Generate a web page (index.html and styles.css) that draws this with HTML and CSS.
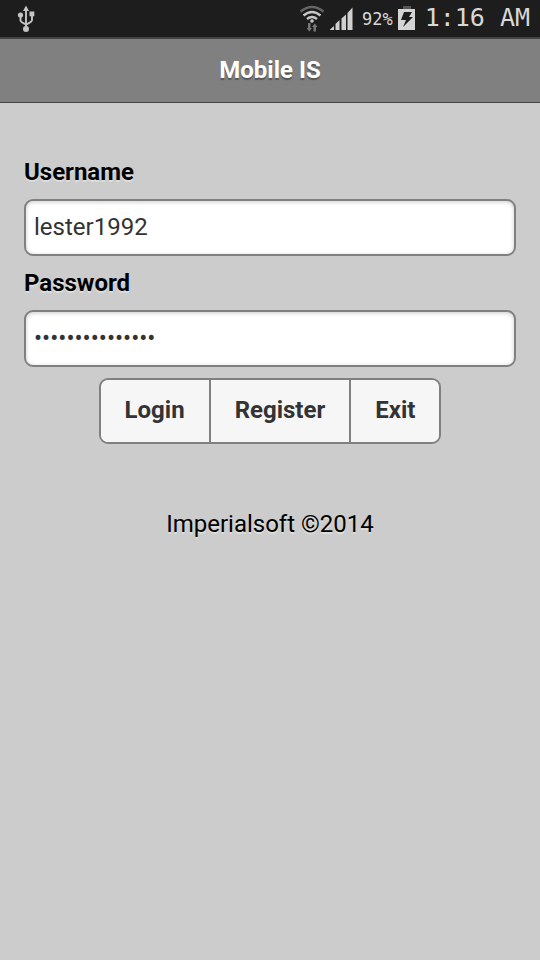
FILE: index.html
```html
<!DOCTYPE html>
<html lang="en">
<head>
<meta charset="utf-8">
<meta name="viewport" content="width=device-width, initial-scale=1">
<title>Mobile IS</title>
<link rel="stylesheet" href="styles.css">
</head>
<body>
<div class="status">
  <svg class="usb" width="18" height="28" viewBox="0 0 18 28" aria-hidden="true">
    <path d="M9 5v18M3.500 11v4.500q0 1.500 5.500 4M15 10v5q0 2-6 4.500" fill="none" stroke="#c4c4c4" stroke-width="1.900"/>
    <path d="M9 .500l3 5.500h-6z" fill="#c4c4c4"/>
    <circle cx="9" cy="24" r="3" fill="#c4c4c4"/>
    <circle cx="3.500" cy="10" r="2.600" fill="#c4c4c4"/>
    <rect x="12.500" y="6.500" width="4.800" height="4.800" fill="#c4c4c4"/>
  </svg>
  <div class="indicators">
    <svg width="26" height="28" viewBox="0 0 26 28" aria-hidden="true">
      <g fill="none" stroke-width="2.300">
        <path d="M1.500 6.500q11.500-9 23 0" stroke="#666"/>
        <path d="M4.500 10.500q8.500-7 17 0M8 14q5-4 10 0" stroke="#c8c8c8"/>
      </g>
      <circle cx="13" cy="16" r="1.800" fill="#c8c8c8"/>
      <path d="M9 18h2.500v5H13l-2.700 3.500L7.500 23H9zM14.500 26.500V22H13l2.800-3.500 2.700 3.500H17v4.500z" fill="#777"/>
    </svg>
    <svg width="23" height="24" viewBox="0 0 23 24" aria-hidden="true">
      <path d="M0 23v-.500L4 19v4zM5.500 23v-6L9.500 13v10zM11.500 23V11.500l4.500-4V23zM17.500 23V6L22.500 .500V23z" fill="#d0d0d0"/>
    </svg>
    <span class="percent">92%</span>
    <svg width="18" height="25" viewBox="0 0 18 25" aria-hidden="true">
      <path d="M5 0h8v3H5z" fill="#555"/>
      <path d="M0 3h17v21H0z" fill="#d4d4d4"/>
      <path d="M6 6h8l-3 5h4L5 21l3-7H3z" fill="#1d1d1d"/>
    </svg>
    <time class="clock">1:16 AM</time>
  </div>
</div>
<header class="header"><h1 class="title">Mobile IS</h1></header>
<main class="content">
  <form class="form">
    <label class="label" for="username">Username</label>
    <input class="field" id="username" type="text" value="lester1992">
    <label class="label" for="password">Password</label>
    <input class="field" id="password" type="password" value="123456789012345">
    <div class="buttons">
      <button class="button" type="button">Login</button>
      <button class="button" type="button">Register</button>
      <button class="button" type="button">Exit</button>
    </div>
  </form>
  <p class="copyright">Imperialsoft ©2014</p>
</main>
</body>
</html>
```
FILE: styles.css
```css
* { box-sizing: border-box; }

body {
  margin: 0;
  min-height: 100vh;
  background: #ccc;
  color: #000;
  font: 24px/32px Roboto, sans-serif;
}

.status {
  display: flex;
  align-items: center;
  justify-content: space-between;
  height: 37px;
  padding: 0 10px 0 17px;
  background: #1d1d1d;
}

.indicators {
  display: flex;
  align-items: center;
  gap: 5px;
  color: #d8d8d8;
  font-family: "DejaVu Sans Mono", monospace;
}

.percent {
  margin-left: 4px;
  font-size: 17px;
}

.clock {
  margin-left: 4px;
  padding-bottom: 2px;
  font-size: 25px;
}

.header {
  padding: 15px 24px 16px;
  border-top: 2px solid #444;
  border-bottom: 1px solid #444;
  background: #808080;
}

.title {
  margin: 0;
  color: #fff;
  font-size: 24px;
  font-weight: 700;
  line-height: 32px;
  text-align: center;
  text-shadow: 0 2px 1px #555;
}

.content { padding: 53px 24px 24px; }

.form {
  display: flex;
  flex-direction: column;
  gap: 11px;
}

.label {
  font-weight: 700;
  text-shadow: 0 2px 0 #ddd;
}

.field {
  width: 100%;
  height: 57px;
  padding: 0 8px 2px;
  border: 2px solid #808080;
  border-radius: 9px;
  background: #fff;
  box-shadow: inset 0 1px 4px #ccc;
  color: #333;
  font: inherit;
}

.buttons {
  display: flex;
  align-self: center;
  border: 2px solid #808080;
  border-radius: 9px;
  overflow: hidden;
}

.button {
  height: 62px;
  padding: 0 24px 2px;
  border: 0;
  background: #f6f6f6;
  color: #333;
  font: inherit;
  font-weight: 700;
}

.button + .button { border-left: 2px solid #808080; }

.copyright {
  margin: 64px 0 0;
  text-align: center;
  text-shadow: 0 2px 0 #ddd;
}
```
